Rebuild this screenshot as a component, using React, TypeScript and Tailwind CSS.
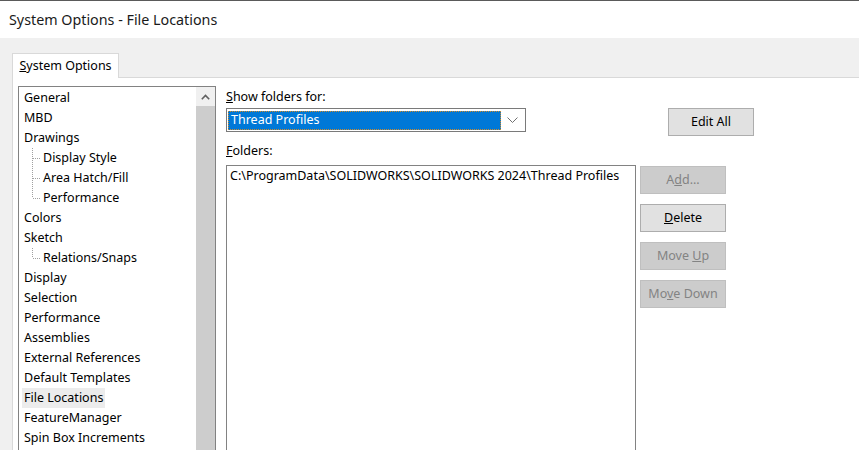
import React from "react";

const font = { fontFamily: '"Noto Sans", "Segoe UI", Arial, sans-serif' };

type Item = { label: string; child?: boolean; last?: boolean; selected?: boolean };

const items: Item[] = [
  { label: "General" },
  { label: "MBD" },
  { label: "Drawings" },
  { label: "Display Style", child: true },
  { label: "Area Hatch/Fill", child: true },
  { label: "Performance", child: true, last: true },
  { label: "Colors" },
  { label: "Sketch" },
  { label: "Relations/Snaps", child: true, last: true },
  { label: "Display" },
  { label: "Selection" },
  { label: "Performance" },
  { label: "Assemblies" },
  { label: "External References" },
  { label: "Default Templates" },
  { label: "File Locations", selected: true },
  { label: "FeatureManager" },
  { label: "Spin Box Increments" },
];

// dotted tree connector drawn beside child rows
const TreeLine = ({ last }: { last?: boolean }) => (
  <svg width="19" height="20" className="shrink-0">
    <line x1="8.5" y1="0" x2="8.5" y2={last ? 10 : 20} stroke="#a0a0a0" strokeDasharray="1 1" />
    <line x1="9" y1="10.5" x2="17" y2="10.5" stroke="#a0a0a0" strokeDasharray="1 1" />
  </svg>
);

const Btn = ({
  children,
  disabled,
  className = "",
}: {
  children: React.ReactNode;
  disabled?: boolean;
  className?: string;
}) => (
  <div
    className={
      "w-[86px] h-[28px] flex items-center justify-center border text-[12.5px] " +
      (disabled
        ? "bg-[#cccccc] border-[#bfbfbf] text-[#838383] "
        : "bg-[#e1e1e1] border-[#adadad] text-black ") +
      className
    }
  >
    {children}
  </div>
);

const App: React.FC = () => {
  return (
    <div style={font} className="w-[859px] h-[450px] overflow-hidden flex flex-col text-black">
      {/* title bar */}
      <div className="h-[38px] shrink-0 bg-white border-t border-[#5a5a5a] pl-[9px] flex items-center text-[14.3px] text-[#1a1a1a]">
        System Options - File Locations
      </div>

      <div className="flex-1 bg-[#f0f0f0] pt-[15px] pl-[12px] flex flex-col min-h-0">
        {/* tabs */}
        <div className="flex items-end shrink-0">
          <div className="w-[107px] h-[25px] bg-white border-l border-t border-r border-[#d9d9d9] flex items-center justify-center text-[12.5px]">
            <span>
              <span className="underline">S</span>ystem Options
            </span>
          </div>
          <div className="flex-1 border-b border-[#d9d9d9]" />
        </div>

        {/* panel */}
        <div className="flex-1 bg-white border-l border-[#d9d9d9] flex pt-[8px] pl-[5px] min-h-0 text-[12.5px]">
          {/* tree list */}
          <div className="w-[198px] h-[400px] border border-[#828282] flex shrink-0">
            <div className="flex-1 flex flex-col pt-px">
              {items.map((it, i) => (
                <div key={i} className="h-[20px] flex items-center pl-[5px] leading-[20px] whitespace-nowrap">
                  {it.child && <TreeLine last={it.last} />}
                  {it.selected ? (
                    <span className="bg-[#ececec] -ml-[2px] px-[2px]">{it.label}</span>
                  ) : (
                    <span>{it.label}</span>
                  )}
                </div>
              ))}
            </div>
            <div className="w-[19px] flex flex-col shrink-0">
              <div className="h-[19px] bg-[#f0f0f0] flex items-center justify-center">
                <svg width="9" height="6" viewBox="0 0 9 6">
                  <path d="M0.8 5.2 L4.5 1.5 L8.2 5.2" fill="none" stroke="#606060" strokeWidth="1.6" />
                </svg>
              </div>
              <div className="flex-1 bg-[#cdcdcd]" />
            </div>
          </div>

          {/* right side */}
          <div className="ml-[10px] flex flex-col">
            <div className="flex">
              <div className="flex flex-col">
                <div className="h-[20px] leading-[20px] pt-px">
                  <span className="underline">S</span>how folders for:
                </div>
                <div className="mt-[2px] w-[300px] h-[24px] border border-[#7a7a7a] flex items-center p-px bg-white">
                  <div className="w-[273px] h-[19px] bg-[#0078d7] border border-dotted border-[#d08a2a] text-white flex items-center pl-[2px]">
                    Thread Profiles
                  </div>
                  <div className="flex-1 flex justify-center">
                    <svg width="11" height="6" viewBox="0 0 11 6">
                      <path d="M0.5 0.5 L5.5 5.5 L10.5 0.5" fill="none" stroke="#707070" strokeWidth="1" />
                    </svg>
                  </div>
                </div>
              </div>
              <Btn className="ml-[142px] mt-[22px]">Edit All</Btn>
            </div>

            <div className="mt-[5px] h-[20px] leading-[20px]">
              <span className="underline">F</span>olders:
            </div>
            <div className="mt-[4px] flex">
              <div className="w-[410px] h-[300px] border border-[#828282] pl-[3px] whitespace-nowrap">
                <div className="h-[20px] leading-[20px]">
                  C:\ProgramData\SOLIDWORKS\SOLIDWORKS 2024\Thread Profiles
                </div>
              </div>
              <div className="ml-[4px] mt-px flex flex-col gap-[10px]">
                <Btn disabled>
                  <span>
                    A<span className="underline">d</span>d...
                  </span>
                </Btn>
                <Btn>
                  <span>
                    <span className="underline">D</span>elete
                  </span>
                </Btn>
                <Btn disabled>
                  <span>
                    Move <span className="underline">U</span>p
                  </span>
                </Btn>
                <Btn disabled>
                  <span>
                    Mo<span className="underline">v</span>e Down
                  </span>
                </Btn>
              </div>
            </div>
          </div>
        </div>
      </div>
    </div>
  );
};

export default App;
